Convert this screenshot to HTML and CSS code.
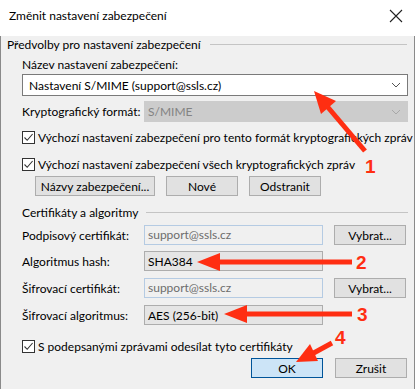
FILE: index.html
```html
<!DOCTYPE html>
<html lang="cs">
<head>
    <meta charset="UTF-8">
    <title>Změnit nastavení zabezpečení</title>
    <link rel="stylesheet" href="styles.css">
</head>
<body>
    <div class="window">
        <div class="titlebar">
            <span class="title">Změnit nastavení zabezpečení</span>
            <svg class="close" width="16" height="16" viewBox="0 0 16 16">
                <path d="M2 2 L14 14 M14 2 L2 14" stroke="#222" stroke-width="1.1" fill="none"/>
            </svg>
        </div>

        <div class="content">
            <div class="group-head top">
                <span>Předvolby pro nastavení zabezpečení</span>
                <span class="rule"></span>
            </div>

            <div class="sub">
                <div class="row label-row">Název nastavení zabezpečení:</div>
                <div class="select main-select">
                    <span>Nastavení S/MIME (support@ssls.cz)</span>
                    <svg class="chev" width="10" height="6" viewBox="0 0 10 6"><path d="M1 1 L5 5 L9 1" stroke="#555" fill="none"/></svg>
                </div>

                <div class="row format-row">
                    <span class="lbl">Kryptografický formát:</span>
                    <div class="select disabled">
                        <span>S/MIME</span>
                        <svg class="chev" width="10" height="6" viewBox="0 0 10 6"><path d="M1 1 L5 5 L9 1" stroke="#a8a8a8" fill="none"/></svg>
                    </div>
                </div>

                <div class="row check cb1">
                    <span class="box"><svg width="11" height="11" viewBox="0 0 11 11"><path d="M1.5 5.5 L4.2 8.3 L9.6 2" stroke="#333" stroke-width="1.1" fill="none"/></svg></span>
                    <span>Výchozí nastavení zabezpečení pro tento formát kryptografických zpráv</span>
                </div>
                <div class="row check cb2">
                    <span class="box"><svg width="11" height="11" viewBox="0 0 11 11"><path d="M1.5 5.5 L4.2 8.3 L9.6 2" stroke="#333" stroke-width="1.1" fill="none"/></svg></span>
                    <span>Výchozí nastavení zabezpečení všech kryptografických zpráv</span>
                </div>

                <div class="button-row">
                    <button class="btn wide">Názvy zabezpečení...</button>
                    <button class="btn">Nové</button>
                    <button class="btn">Odstranit</button>
                </div>

                <div class="group-head second">
                    <span>Certifikáty a algoritmy</span>
                    <span class="rule"></span>
                </div>

                <div class="row field-row r1">
                    <span class="lbl">Podpisový certifikát:</span>
                    <div class="field">support@ssls.cz</div>
                    <button class="btn">Vybrat...</button>
                </div>
                <div class="row field-row r2">
                    <span class="lbl">Algoritmus hash:</span>
                    <div class="combo"><span>SHA384</span><span class="dash"></span></div>
                </div>
                <div class="row field-row r3">
                    <span class="lbl">Šifrovací certifikát:</span>
                    <div class="field">support@ssls.cz</div>
                    <button class="btn">Vybrat...</button>
                </div>
                <div class="row field-row r4">
                    <span class="lbl">Šifrovací algoritmus:</span>
                    <div class="combo"><span>AES (256-bit)</span><span class="dash"></span></div>
                </div>

                <div class="row check cb3">
                    <span class="box"><svg width="11" height="11" viewBox="0 0 11 11"><path d="M1.5 5.5 L4.2 8.3 L9.6 2" stroke="#333" stroke-width="1.1" fill="none"/></svg></span>
                    <span>S podepsanými zprávami odesílat tyto certifikáty</span>
                </div>
            </div>

            <div class="footer">
                <button class="btn default">OK</button>
                <button class="btn">Zrušit</button>
            </div>
        </div>

        <!-- red annotation arrows -->
        <svg class="marks" width="415" height="389" viewBox="0 0 415 389">
            <g fill="#ff2e12" stroke="none">
                <line x1="365" y1="151" x2="326" y2="105" stroke="#ff2e12" stroke-width="5"/>
                <polygon points="314,91 336,101 321,114"/>
                <text x="365" y="173" class="num">1</text>

                <line x1="352" y1="262" x2="214" y2="262" stroke="#ff2e12" stroke-width="5"/>
                <polygon points="197,262 220,253 220,271"/>
                <text x="356" y="269" class="num">2</text>

                <line x1="352" y1="314" x2="242" y2="314" stroke="#ff2e12" stroke-width="5"/>
                <polygon points="224,314 247,305 247,323"/>
                <text x="357" y="321" class="num">3</text>

                <line x1="332" y1="343" x2="310" y2="355" stroke="#ff2e12" stroke-width="5"/>
                <polygon points="296,362 310,344 318,361"/>
                <text x="335" y="344" class="num">4</text>
            </g>
        </svg>
    </div>
</body>
</html>
```

FILE: styles.css
```css
html, body {
    margin: 0;
    padding: 0;
}

body {
    font-family: Lato, 'Noto Sans', sans-serif;
    font-size: 12px;
    color: #000;
    background: #fff;
    white-space: nowrap;
}

.window {
    position: relative;
    width: 415px;
    height: 389px;
}

.titlebar {
    height: 31px;
    background: #fff;
    display: flex;
    align-items: center;
    justify-content: space-between;
    padding: 0 11px 0 9px;
}

.title {
    font-size: 12px;
}

.content {
    height: 357px;
    background: #f0f0f0;
    border: 1px solid #8a8a8a;
    border-top: none;
    width: 413px;
}

.group-head {
    display: flex;
    align-items: center;
    height: 16px;
}

.group-head.top {
    margin: 5px 7px 0 6px;
}

.group-head.second {
    margin-top: 8px;
}

.rule {
    flex: 1;
    height: 1px;
    background: #c4c4c4;
    margin-left: 9px;
}

.group-head.second .rule {
    margin-left: 8px;
}

.sub {
    padding: 0 6px 0 21px;
}

.row {
    display: flex;
    align-items: center;
}

.label-row {
    height: 16px;
    margin-top: 4px;
}

.select {
    display: flex;
    align-items: center;
    justify-content: space-between;
    box-sizing: border-box;
    padding: 0 6px 0 6px;
}

.main-select {
    height: 22px;
    margin-top: 2px;
    background: #fff;
    border: 1px solid #7a7a7a;
}

.format-row {
    height: 21px;
    margin-top: 5px;
}

.lbl {
    width: 122px;
    flex-shrink: 0;
}

.select.disabled {
    flex: 1;
    height: 21px;
    background: #cccccc;
    border: 1px solid #cccccc;
    color: #838383;
    padding-left: 3px;
}

.check {
    height: 16px;
}

.cb1 { margin-top: 7px; }
.cb2 { margin-top: 11px; }
.cb3 { margin-top: 13px; }

.box {
    width: 13px;
    height: 13px;
    box-sizing: border-box;
    border: 1px solid #333;
    background: #fff;
    margin-right: 3px;
    display: flex;
    align-items: center;
    justify-content: center;
}

.button-row {
    display: flex;
    gap: 11px;
    margin-top: 4px;
    padding-left: 13px;
}

.btn {
    font-family: inherit;
    font-size: 12px;
    color: #000;
    width: 72px;
    height: 20px;
    padding: 0;
    background: #e1e1e1;
    border: 1px solid #adadad;
    border-radius: 0;
}

.btn.wide {
    width: 120px;
}

.field-row {
    height: 20px;
}

.r1 { margin-top: 5px; }
.r2 { margin-top: 6px; }
.r3 { margin-top: 7px; }
.r4 { margin-top: 7px; }

.field {
    width: 179px;
    height: 20px;
    box-sizing: border-box;
    border: 1px solid #b5cbe3;
    background: #f0f0f0;
    color: #6d6d6d;
    padding-left: 3px;
    line-height: 18px;
    margin-right: 11px;
}

.combo {
    width: 179px;
    height: 20px;
    box-sizing: border-box;
    border: 1px solid #adadad;
    background: #e5e5e5;
    padding: 0 7px 0 3px;
    display: flex;
    align-items: center;
    justify-content: space-between;
}

.dash {
    width: 3px;
    height: 2px;
    background: #333;
}

.footer {
    display: flex;
    justify-content: flex-end;
    gap: 12px;
    margin-top: 4px;
    padding-right: 7px;
}

.btn.default {
    background: #cce4f7;
    border-color: #005499;
}

.marks {
    position: absolute;
    top: 0;
    left: 0;
    pointer-events: none;
}

.num {
    font-family: 'Liberation Sans', sans-serif;
    font-weight: bold;
    font-size: 19px;
}
```
